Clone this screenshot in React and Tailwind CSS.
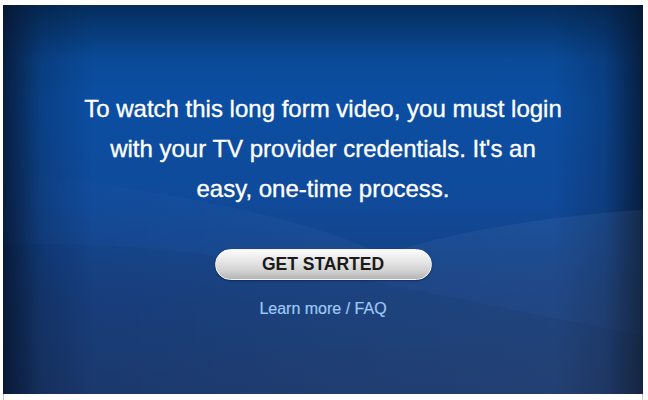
import React from "react";

export default function App() {
  return (
    <div className="w-[648px] h-[400px] bg-white overflow-hidden" style={{ fontFamily: '"Liberation Sans", Arial, sans-serif' }}>
      <div className="ml-[3px] mt-[5px] w-[640px] h-[395px] border-x border-[#c8c8c8]">
        <div className="relative w-[640px] h-[389px] -ml-px overflow-hidden bg-[linear-gradient(to_bottom,#052d5c,#0a4a98_14%,#0b4ea2_25%,#104a9a_50%,#173f80_75%,#1b3a70)]">
          <div className="absolute inset-0 bg-[linear-gradient(to_right,rgba(6,22,48,0.85),rgba(6,22,48,0.25)_6%,transparent_14%,transparent_86%,rgba(6,22,48,0.25)_94%,rgba(6,22,48,0.85))]" />
          <svg className="absolute inset-0" width="640" height="389" viewBox="0 0 640 389">
            <defs>
              <linearGradient id="w1" x1="0" y1="0" x2="1" y2="0">
                <stop offset="0" stopColor="#ffffff" stopOpacity="0" />
                <stop offset="0.5" stopColor="#ffffff" stopOpacity="0.03" />
                <stop offset="1" stopColor="#ffffff" stopOpacity="0.05" />
              </linearGradient>
            </defs>
            <path d="M0 165 C 150 185, 300 210, 380 250 C 450 225, 560 210, 640 205 L 640 389 L 0 389 Z" fill="url(#w1)" />
            <path d="M0 240 C 200 230, 420 290, 640 330 L 640 389 L 0 389 Z" fill="#000000" fillOpacity="0.04" />
          </svg>
          <div className="relative flex flex-col items-center pt-[84px]">
            <p className="text-white text-[24px] leading-[40px] text-center [-webkit-text-stroke:0.35px_white]">
              To watch this long form video, you must login
              <br />
              with your TV provider credentials. It's an
              <br />
              easy, one-time process.
            </p>
            <button className="mt-[40px] w-[217px] h-[31px] rounded-full border border-[#f4f4f4] bg-[linear-gradient(to_bottom,#fbfbfb,#e6e6e6_40%,#cfcfcf_75%,#b4b4b4)] shadow-[0_1px_2px_rgba(0,0,0,0.35)] text-[#1a1a1a] font-bold text-[17.5px] leading-none flex items-center justify-center">
              GET STARTED
            </button>
            <a className="mt-[19px] text-[#9ccaf4] text-[16px] leading-[20px] [-webkit-text-stroke:0.2px_#9ccaf4]">Learn more / FAQ</a>
          </div>
        </div>
      </div>
    </div>
  );
}
